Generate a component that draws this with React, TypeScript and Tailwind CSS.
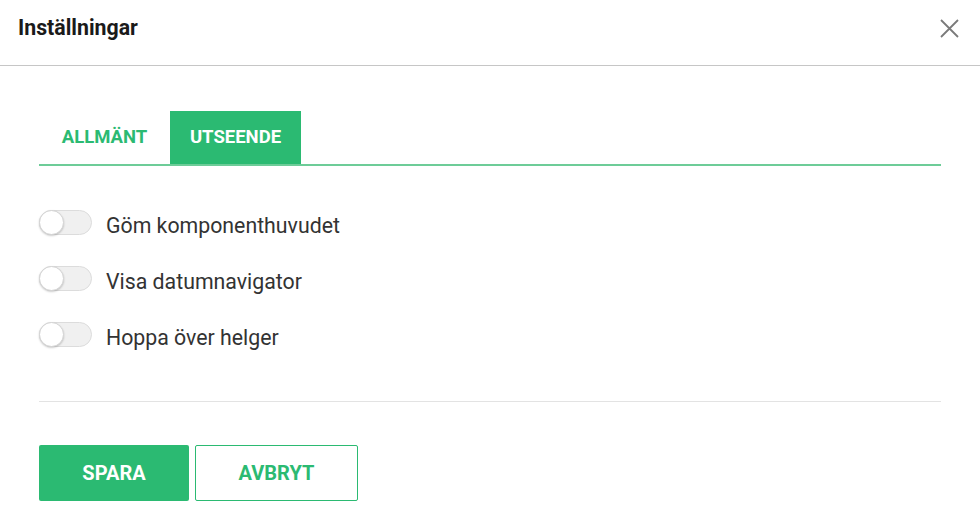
import React from "react";

function Toggle() {
  return (
    <div className="relative h-[25px] w-[53px] shrink-0 rounded-full border border-[#dcdcdc] bg-[#f0f0f0]">
      <div className="absolute left-[-1px] top-[-1px] h-[25px] w-[25px] rounded-full border border-[#d4d4d4] bg-white shadow-[0_1px_2px_rgba(0,0,0,0.2)]" />
    </div>
  );
}

export default function App() {
  const rows = ["Göm komponenthuvudet", "Visa datumnavigator", "Hoppa över helger"];
  return (
    <div className="h-[528px] w-[980px] bg-white font-['Roboto',sans-serif]">
      <div className="flex h-[66px] items-start justify-between border-b border-[#c6c6c6] pl-[18px] pr-[21px]">
        <span className="mt-[17px] text-[21.3px] font-bold leading-none text-[#1a1a1a]">Inställningar</span>
        <svg width="19" height="19" viewBox="0 0 19 19" className="mt-[19px]">
          <path d="M1 1 L18 18 M18 1 L1 18" stroke="#7a7a7a" strokeWidth="1.8" />
        </svg>
      </div>
      <div className="px-[39px]">
        <div className="mt-[45px] flex h-[55px] border-b-2 border-[#6dcc98]">
          <div className="flex w-[131px] items-center justify-center text-[18.5px] font-bold text-[#2bba72]">
            ALLMÄNT
          </div>
          <div className="flex w-[131px] items-center justify-center bg-[#2bba72] text-[18.5px] font-bold text-white">
            UTSEENDE
          </div>
        </div>
        <div className="mt-[44px] flex flex-col gap-[31px]">
          {rows.map((r) => (
            <div key={r} className="flex h-[25px] items-center gap-[14px]">
              <Toggle />
              <span className="whitespace-nowrap pt-[6px] text-[21.3px] leading-none text-[#333333]">{r}</span>
            </div>
          ))}
        </div>
        <div className="mt-[54px] border-t border-[#e3e3e3]" />
        <div className="mt-[43px] flex gap-[6px]">
          <button className="h-[56px] w-[150px] rounded-[2px] bg-[#2bba72] text-[20px] font-bold text-white">
            SPARA
          </button>
          <button className="h-[56px] w-[163px] rounded-[2px] border border-[#2bba72] bg-white text-[20px] font-bold text-[#2bba72]">
            AVBRYT
          </button>
        </div>
      </div>
    </div>
  );
}
